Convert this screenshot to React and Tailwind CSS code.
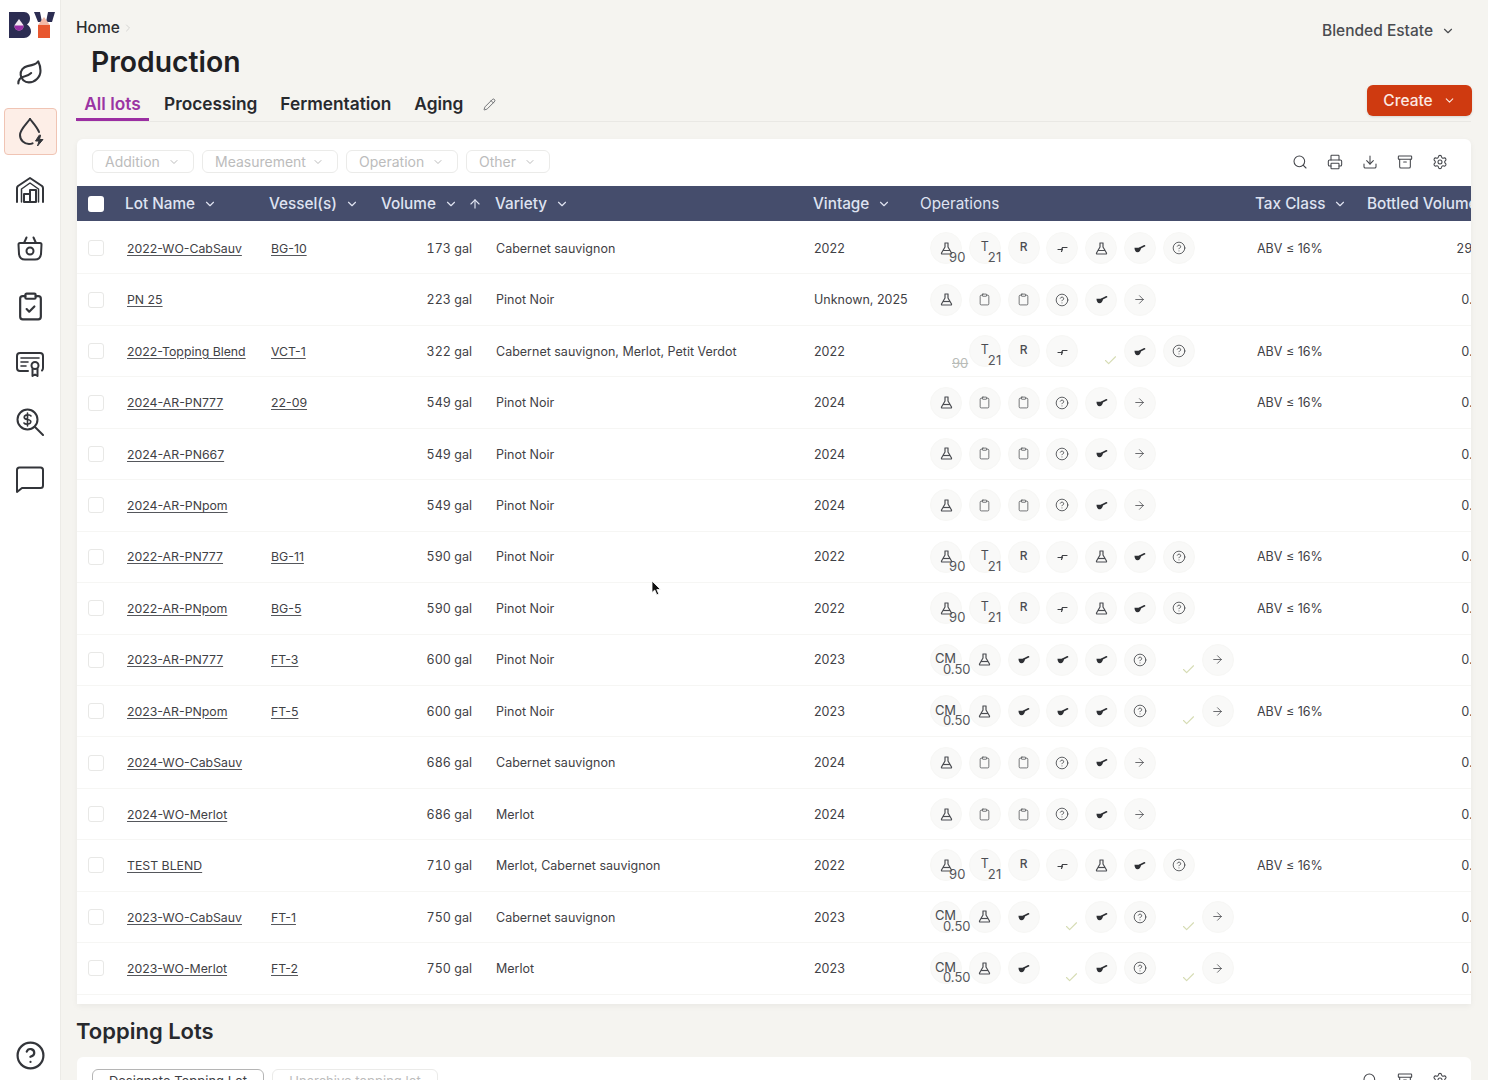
import React from 'react'
import { ChevronDown, ChevronRight, ArrowUp, ArrowRight, Search, Printer, Archive, Settings, Pencil, Check, CircleHelp, Leaf, ClipboardCheck, Clipboard, Download } from 'lucide-react'

const rows = [
    { lot: '2022-WO-CabSauv', vessel: 'BG-10', volume: '173 gal', variety: 'Cabernet sauvignon', vintage: '2022', ops: 'tank', tax: true, bottled: '29.0 gal', wide: true },
    { lot: 'PN 25', vessel: '', volume: '223 gal', variety: 'Pinot Noir', vintage: 'Unknown, 2025', ops: 'plain', tax: false, bottled: '0.00 gal' },
    { lot: '2022-Topping Blend', vessel: 'VCT-1', volume: '322 gal', variety: 'Cabernet sauvignon, Merlot, Petit Verdot', vintage: '2022', ops: 'topping', tax: true, bottled: '0.00 gal' },
    { lot: '2024-AR-PN777', vessel: '22-09', volume: '549 gal', variety: 'Pinot Noir', vintage: '2024', ops: 'plain', tax: true, bottled: '0.00 gal' },
    { lot: '2024-AR-PN667', vessel: '', volume: '549 gal', variety: 'Pinot Noir', vintage: '2024', ops: 'plain', tax: false, bottled: '0.00 gal' },
    { lot: '2024-AR-PNpom', vessel: '', volume: '549 gal', variety: 'Pinot Noir', vintage: '2024', ops: 'plain', tax: false, bottled: '0.00 gal' },
    { lot: '2022-AR-PN777', vessel: 'BG-11', volume: '590 gal', variety: 'Pinot Noir', vintage: '2022', ops: 'tank', tax: true, bottled: '0.00 gal' },
    { lot: '2022-AR-PNpom', vessel: 'BG-5', volume: '590 gal', variety: 'Pinot Noir', vintage: '2022', ops: 'tank', tax: true, bottled: '0.00 gal' },
    { lot: '2023-AR-PN777', vessel: 'FT-3', volume: '600 gal', variety: 'Pinot Noir', vintage: '2023', ops: 'ferment', tax: false, bottled: '0.00 gal' },
    { lot: '2023-AR-PNpom', vessel: 'FT-5', volume: '600 gal', variety: 'Pinot Noir', vintage: '2023', ops: 'ferment', tax: true, bottled: '0.00 gal' },
    { lot: '2024-WO-CabSauv', vessel: '', volume: '686 gal', variety: 'Cabernet sauvignon', vintage: '2024', ops: 'plain', tax: false, bottled: '0.00 gal' },
    { lot: '2024-WO-Merlot', vessel: '', volume: '686 gal', variety: 'Merlot', vintage: '2024', ops: 'plain', tax: false, bottled: '0.00 gal' },
    { lot: 'TEST BLEND', vessel: '', volume: '710 gal', variety: 'Merlot, Cabernet sauvignon', vintage: '2022', ops: 'tank', tax: true, bottled: '0.00 gal' },
    { lot: '2023-WO-CabSauv', vessel: 'FT-1', volume: '750 gal', variety: 'Cabernet sauvignon', vintage: '2023', ops: 'done', tax: false, bottled: '0.00 gal' },
    { lot: '2023-WO-Merlot', vessel: 'FT-2', volume: '750 gal', variety: 'Merlot', vintage: '2023', ops: 'done', tax: false, bottled: '0.00 gal' },
]

const opSets = {
    tank: ['flask90', 't21', 'r', 'transfer', 'flask', 'ladle', 'help'],
    plain: ['flask', 'clip', 'clip', 'help', 'ladle', 'arrow'],
    topping: ['ghost90', 't21', 'r', 'transfer', 'check', 'ladle', 'help'],
    ferment: ['cm', 'flask', 'ladle', 'ladle', 'ladle', 'help', 'check', 'arrow'],
    done: ['cm', 'flask', 'ladle', 'check', 'ladle', 'help', 'check', 'arrow'],
}

const cols = 'grid grid-cols-[48px_144px_111px_114px_318px_107px_336px_111px_144px]'

function Logo() {
    return (
        <svg width="46" height="26" viewBox="0 0 46 26">
            <path d="M0 0H15C19 0 21 3 21 6.500C21 9 20 11 18 12.500C20.500 14 22 16.500 22 19.500C22 23 19 26 15 26H0Z" fill="#2c2d52" />
            <path d="M10 7L14 12.500C15.500 15.500 13 18.500 10 18.500C7 18.500 4.500 15.500 6 12.500Z" fill="#f4e9f2" />
            <path d="M5.500 13.500H14.500C14.800 16.500 12.800 18.500 10 18.500C7.200 18.500 5.200 16.500 5.500 13.500Z" fill="#9a2ea6" />
            <path d="M25 0H31L33 10H29Z" fill="#2c2d52" />
            <path d="M39 0H46L43 10H37Z" fill="#2c2d52" />
            <path d="M29 13L35 5L41 13Z" fill="#f3b8a6" />
            <rect x="29" y="13" width="12" height="13" fill="#e8572f" />
        </svg>
    )
}

function NavSvg({ children }) {
    return (
        <svg width="28" height="28" viewBox="0 0 28 28" fill="none" stroke="#33353a" strokeWidth="2" strokeLinecap="round" strokeLinejoin="round">
            {children}
        </svg>
    )
}

function NavSlot({ children, className }) {
    return <div className={`h-[58px] flex items-center justify-center shrink-0 ${className || ''}`}>{children}</div>
}

function Sidebar() {
    return (
        <aside className="w-[61px] shrink-0 h-full bg-white border-r border-[#ecebe7] flex flex-col items-center">
            <div className="mt-[12px] ml-[3px] h-[26px]">
                <Logo />
            </div>
            <NavSlot className="mt-[6px]">
                <Leaf size={28} strokeWidth={1.800} color="#33353a" />
            </NavSlot>
            <div className="h-[59px] flex items-center shrink-0">
                <div className="w-[53px] h-[47px] rounded bg-[#fdeee7] border border-[#f0c4b4] flex items-center justify-center">
                    <NavSvg>
                        <path d="M14 1C10.500 6 4 11.500 4 17C4 22.500 8.500 26 13 26C14 26 15.500 25.800 16.500 25.300" />
                        <path d="M14 1C17 5 21 9 23 14" />
                        <path d="M23 17.500L19.500 23H23L21.500 28L27 21.500H23.500L24.500 17.500Z" fill="#33353a" strokeWidth="1" />
                    </NavSvg>
                </div>
            </div>
            <NavSlot>
                <NavSvg>
                    <path d="M1 26V12C1 11 1.500 10.500 2 10L14 2L26 10C26.500 10.500 27 11 27 12V26" />
                    <path d="M5.500 26V13L14 7L22.500 13V26" strokeWidth="1.500" />
                    <path d="M8 26V18H14V26ZM14 26V14H20V26ZM8 26H20" />
                </NavSvg>
            </NavSlot>
            <NavSlot>
                <NavSvg>
                    <path d="M2.500 10.500C2.500 9.500 3 9 4 9H24C25 9 25.500 9.500 25.500 10.500L25 20C24.500 23.500 22 25.500 19 25.500H9C6 25.500 3.500 23.500 3 20Z" />
                    <path d="M8 9L10.500 3.500M20 9L17.500 3.500" />
                    <circle cx="14" cy="17" r="3.500" />
                </NavSvg>
            </NavSlot>
            <NavSlot>
                <ClipboardCheck size={31} strokeWidth={1.700} color="#33353a" />
            </NavSlot>
            <NavSlot>
                <NavSvg>
                    <path d="M12 21H4C2 21 1 20 1 18V6C1 4 2 3 4 3H24C26 3 27 4 27 6V18C27 19 26.500 20 26 20.500" />
                    <path d="M5 8H23M5 12H12M5 16H10" strokeWidth="1.600" />
                    <circle cx="19" cy="15.500" r="3.500" />
                    <path d="M16.500 19V26L19 24.500L21.500 26V19" />
                </NavSvg>
            </NavSlot>
            <NavSlot>
                <svg width="28" height="28" viewBox="0 0 28 28" fill="none" stroke="#33353a" strokeWidth="2" strokeLinecap="round">
                    <circle cx="11.500" cy="11.500" r="10" />
                    <path d="M19 19L27 27" />
                    <path d="M15 8C14 6.500 8.500 6 8.200 9.200C8 12.500 15 10.500 14.800 13.800C14.500 17 9 16.500 8 15M11.500 5V18" strokeWidth="1.600" />
                </svg>
            </NavSlot>
            <NavSlot>
                <NavSvg>
                    <path d="M1 26V4C1 2.500 2 1.500 3.500 1.500H24.500C26 1.500 27 2.500 27 4V19.500C27 21 26 22 24.500 22H6Z" />
                </NavSvg>
            </NavSlot>
            <div className="mt-auto mb-[9px]">
                <CircleHelp size={31} strokeWidth={1.700} color="#33353a" />
            </div>
        </aside>
    )
}

function FlaskIcon() {
    return (
        <svg width="13" height="13" viewBox="0 0 13 13" fill="none" stroke="#4b4d52" strokeWidth="1.200" strokeLinejoin="round">
            <path d="M4.500 1H8.500M5 1V5L1.500 11C1.300 11.500 1.600 12 2 12H11C11.400 12 11.700 11.500 11.500 11L8 5V1" />
            <path d="M3 8.500H10" />
        </svg>
    )
}

function LadleIcon() {
    return (
        <svg width="13" height="13" viewBox="0 0 13 13">
            <path d="M1.500 5.800H8C8 8.500 6.300 10.300 4.500 10.300C2.700 10.300 1.500 8.500 1.500 5.800Z" fill="#2e3034" />
            <path d="M6.500 6.200L11.500 3.800" stroke="#2e3034" strokeWidth="1.700" strokeLinecap="round" />
        </svg>
    )
}

function TransferIcon() {
    return (
        <svg width="13" height="13" viewBox="0 0 13 13" fill="none" stroke="#3f4145" strokeWidth="1.200" strokeLinecap="round">
            <path d="M2 7.500H5.500L6.500 5.500H11" />
            <path d="M5.500 9.500L6.500 7" />
        </svg>
    )
}

function Circle({ children }) {
    return (
        <div className="w-8 h-8 rounded-full bg-[#f9f9f8] border border-[#f7f7f5] flex items-center justify-center relative text-[12px] text-[#4b4d52] leading-none">
            {children}
        </div>
    )
}

function Corner({ children }) {
    return <span className="absolute left-[18px] top-[18px] text-[13px] leading-none tracking-[0.3px] text-[#55575c]">{children}</span>
}

function Op({ type }) {
    if (type === 'check') {
        return (
            <div className="w-[38.800px] h-8 relative">
                <Check size={15} strokeWidth={1.800} color="#d6dcb4" className="absolute left-[18px] top-[18px]" />
            </div>
        )
    }
    if (type === 'ghost90') {
        return (
            <div className="w-[38.800px] h-8 relative">
                <span className="absolute left-[22px] top-[22px] text-[13px] leading-none text-[#b9bcb8] line-through">90</span>
            </div>
        )
    }
    let inner = null
    if (type === 'flask') inner = <FlaskIcon />
    if (type === 'flask90') inner = <><FlaskIcon /><Corner>90</Corner></>
    if (type === 't21') inner = <><span className="-mt-[2px] text-[12.500px]">T</span><Corner>21</Corner></>
    if (type === 'r') inner = <span className="-mt-[2px] font-medium">R</span>
    if (type === 'transfer') inner = <TransferIcon />
    if (type === 'ladle') inner = <LadleIcon />
    if (type === 'clip') inner = <Clipboard size={13} strokeWidth={1.300} color="#3f4145" />
    if (type === 'help') inner = <CircleHelp size={14} strokeWidth={1.400} color="#3f4145" />
    if (type === 'arrow') inner = <ArrowRight size={13} strokeWidth={1.400} color="#3f4145" />
    if (type === 'cm') inner = <><span className="-mt-[2px] -ml-[1px] text-[13px]">CM</span><span className="absolute left-[12px] top-[18px] text-[13px] leading-none text-[#55575c]">0.50</span></>
    return (
        <div className="w-[38.800px] h-8">
            <Circle>{inner}</Circle>
        </div>
    )
}

function FilterButton({ label, className }) {
    return (
        <button className={`h-[23px] rounded-md border border-[#ebebe9] bg-white flex items-center justify-between pl-[12px] pr-[13px] text-[14px] text-[#bcbcbc] ${className}`}>
            {label}
            <ChevronDown size={12} color="#bcbcbc" />
        </button>
    )
}

function HeaderCell({ label, light }) {
    return (
        <div className={`flex items-center gap-[8px] whitespace-nowrap ${light ? 'font-normal' : 'font-medium'}`}>
            {label}
            {!light && <ChevronDown size={14} />}
        </div>
    )
}

function Row({ row }) {
    return (
        <div className={`${cols} h-[51.450px] items-center border-b border-[#f6f6f4] text-[12.500px] text-[#3f4145] whitespace-nowrap`}>
            <div className="pl-[11px]">
                <div className="w-4 h-4 rounded-[3px] border border-[#e8e8e6] bg-white" />
            </div>
            <div className="pl-[2px] pt-[2px]"><span className="text-[12.300px] underline underline-offset-[2px] decoration-[#55575c]">{row.lot}</span></div>
            <div className="pl-[2px] pt-[2px]">{row.vessel && <span className="text-[12.300px] underline underline-offset-[2px] decoration-[#55575c]">{row.vessel}</span>}</div>
            <div className="text-right pr-[22px] pt-[2px] tabular-nums">{row.volume}</div>
            <div className="pl-[2px] pt-[2px]">{row.variety}</div>
            <div className="pl-[2px] pt-[2px]">{row.vintage}</div>
            <div className="pl-[11px] flex items-center">
                {opSets[row.ops].map((op, i) => <Op key={i} type={op} />)}
            </div>
            <div className="pl-[2px] pt-[2px]">{row.tax && 'ABV ≤ 16%'}</div>
            <div className={`text-right pt-[2px] tabular-nums ${row.wide ? 'pr-[5px]' : ''}`}>{row.bottled}</div>
        </div>
    )
}

export default function App() {
    return (
        <div className="h-screen w-full overflow-hidden flex bg-[#f5f4f0] font-['Inter',sans-serif] relative">
            <Sidebar />
            <main className="flex-1 min-w-0 pl-[16px] pr-[17px]">
                <div className="flex items-center justify-between h-[30px] mt-[13px] -ml-[1px]">
                    <div className="flex items-center gap-[2px] text-[15.500px] font-medium text-[#2b2d31]">
                        Home
                        <ChevronRight size={12} color="#d5d5d3" />
                    </div>
                    <div className="flex items-center gap-[8px] mt-[6px] text-[15.500px] font-medium text-[#4a4c50] mr-[16px]">
                        Blended Estate
                        <ChevronDown size={14} />
                    </div>
                </div>
                <h1 className="pl-[14px] mt-[2px] text-[28.300px] leading-[34px] font-semibold text-[#1f2023]">Production</h1>
                <div className="flex items-end justify-between h-[38px] mt-[5px] border-b border-[#e9e8e4]">
                    <div className="flex items-center -ml-[1px] text-[17.300px] font-semibold text-[#27292d] h-[37px]">
                        <div className="h-[37px] w-[73px] flex items-center justify-center pt-[5px] text-[#9b34a3] border-b-[3px] border-[#9b2fa2]">All lots</div>
                        <div className="ml-[15px] h-[37px] flex items-center pt-[3px]">Processing</div>
                        <div className="ml-[23px] h-[37px] flex items-center pt-[3px]">Fermentation</div>
                        <div className="ml-[23px] h-[37px] flex items-center pt-[3px]">Aging</div>
                        <Pencil size={13} strokeWidth={1.500} color="#55575c" className="ml-[20px] mt-[3px]" />
                    </div>
                    <button className="w-[105px] h-[31px] mb-[5px] -mr-[1px] rounded-md bg-[#cf3a10] flex items-center justify-center gap-[10px] text-[15.500px] font-medium text-[#fbe9e2] shadow-sm">
                        Create
                        <ChevronDown size={13} />
                    </button>
                </div>
                <section className="mt-[17px] h-[865px] bg-white rounded-t-md overflow-hidden shadow-[0_2px_6px_rgba(0,0,0,0.05)]">
                    <div className="h-[47px] pb-[2px] flex items-center justify-between pl-[15px] pr-[23px]">
                        <div className="flex items-center gap-2">
                            <FilterButton label="Addition" className="w-[102px]" />
                            <FilterButton label="Measurement" className="w-[136px]" />
                            <FilterButton label="Operation" className="w-[112px]" />
                            <FilterButton label="Other" className="w-[84px]" />
                        </div>
                        <div className="flex items-center gap-[19px] text-[#45474c]">
                            <Search size={16} strokeWidth={1.600} />
                            <Printer size={16} strokeWidth={1.600} />
                            <Download size={16} strokeWidth={1.600} />
                            <Archive size={16} strokeWidth={1.600} />
                            <Settings size={16} strokeWidth={1.600} />
                        </div>
                    </div>
                    <div className={`${cols} h-[35px] pt-[1px] items-center bg-[#454d6c] text-[15.300px] text-[#dfe3f1]`}>
                        <div className="pl-[11px]">
                            <div className="w-4 h-4 rounded-[3px] bg-white" />
                        </div>
                        <HeaderCell label="Lot Name" />
                        <HeaderCell label="Vessel(s)" />
                        <div className="flex items-center font-medium pl-[1px]">
                            Volume
                            <ChevronDown size={14} className="ml-[8px]" />
                            <ArrowUp size={14} className="ml-[10px]" />
                        </div>
                        <div className="pl-[1px]"><HeaderCell label="Variety" /></div>
                        <div className="pl-[1px]"><HeaderCell label="Vintage" /></div>
                        <div className="pl-[1px]"><HeaderCell label="Operations" light /></div>
                        <div><HeaderCell label="Tax Class" /></div>
                        <div className="pl-[1px] font-medium whitespace-nowrap">Bottled Volume</div>
                    </div>
                    <div className="pt-[2px]">
                        {rows.map((row) => <Row key={row.lot} row={row} />)}
                    </div>
                </section>
                <h2 className="mt-[13px] -ml-[1px] text-[22px] leading-[28px] font-semibold text-[#27292d]">Topping Lots</h2>
                <section className="mt-[12px] h-[60px] bg-white rounded-t-md pl-[15px] pr-[23px] pt-[12px] flex justify-between">
                    <div className="flex items-start gap-2">
                        <button className="w-[172px] h-[26px] rounded-md border border-[#b5b5b5] text-[13px] text-[#3f4145]">Designate Topping Lot</button>
                        <button className="w-[166px] h-[26px] rounded-md border border-[#ebebe9] text-[13px] text-[#bcbcbc]">Unarchive topping lot</button>
                    </div>
                    <div className="flex items-start gap-[19px] mt-[3px] text-[#45474c]">
                        <Search size={16} strokeWidth={1.600} />
                        <Archive size={16} strokeWidth={1.600} />
                        <Settings size={16} strokeWidth={1.600} />
                    </div>
                </section>
            </main>
            <svg className="absolute left-[651px] top-[580px]" width="11" height="16" viewBox="0 0 11 16">
                <path d="M1 1V12.500L3.800 10L5.800 14.800L7.800 14L5.800 9.500H9.500Z" fill="#111" stroke="#fff" strokeWidth=".8" />
            </svg>
        </div>
    )
}
